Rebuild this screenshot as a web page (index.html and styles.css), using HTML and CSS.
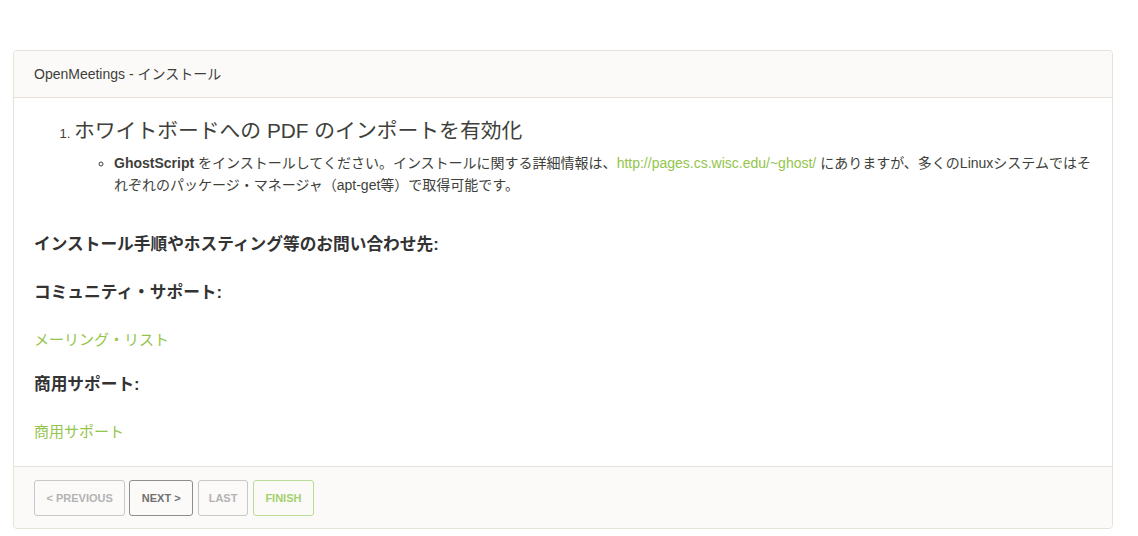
FILE: index.html
```html
<!DOCTYPE html>
<html lang="ja">
<head>
<meta charset="utf-8">
<title>OpenMeetings - インストール</title>
<link rel="stylesheet" href="styles.css">
</head>
<body>
<div class="panel">
  <div class="panel-heading">OpenMeetings - インストール</div>
  <div class="panel-body">
    <ol class="steps">
      <li><span class="step-title">ホワイトボードへの PDF のインポートを有効化</span>
        <ul class="sub">
          <li><b>GhostScript</b> をインストールしてください。インストールに関する詳細情報は、<a href="#">http://pages.cs.wisc.edu/~ghost/</a> にありますが、多くのLinuxシステムではそれぞれのパッケージ・マネージャ（apt-get等）で取得可能です。</li>
        </ul>
      </li>
    </ol>
    <p class="label first">インストール手順やホスティング等のお問い合わせ先:</p>
    <p class="label">コミュニティ・サポート:</p>
    <p class="link"><a href="#">メーリング・リスト</a></p>
    <p class="label">商用サポート:</p>
    <p class="link last"><a href="#">商用サポート</a></p>
  </div>
  <div class="panel-footer">
    <button class="btn btn-disabled">&lt; Previous</button>
    <button class="btn btn-next">Next &gt;</button>
    <button class="btn btn-disabled btn-last">Last</button>
    <button class="btn btn-finish">Finish</button>
  </div>
</div>
</body>
</html>
```
FILE: styles.css
```css
html, body {
  margin: 0;
  padding: 0;
  background: #ffffff;
}
body {
  font-family: "Liberation Sans", Arial, "Noto Sans CJK JP", sans-serif;
  color: #3e3f3a;
  font-size: 14px;
}
a {
  color: #93c54b;
  text-decoration: none;
}
.panel {
  width: 1098px;
  margin: 50px 0 0 13px;
  border: 1px solid #e6e2da;
  border-radius: 4px;
  background: #fff;
}
.panel-heading {
  background: #fbfaf8;
  border-bottom: 1px solid #e6e2da;
  border-radius: 4px 4px 0 0;
  padding: 0 20px;
  height: 46px;
  line-height: 46px;
  font-size: 14px;
  color: #3e3f3a;
}
.panel-body {
  padding: 18px 20px 23px;
}
.steps {
  margin: 0;
  padding-left: 40px;
  font-size: 13px;
}
.steps > li {
  line-height: 30px;
}
.step-title {
  font-size: 20.8px;
  line-height: 30px;
}
.sub {
  margin: 3px 0 0;
  padding-left: 40px;
  list-style-type: circle;
  font-size: 14px;
  line-height: 22px;
}
.sub li::marker {
  font-size: 14px;
}
.label {
  margin: 37px 0 0;
  font-size: 16.7px;
  font-weight: bold;
  line-height: 24px;
  color: #333;
}
.label + .label {
  margin-top: 24px;
}
.link + .label {
  margin-top: 22px;
}
.label + .link {
  margin: 24px 0 0;
}
.link {
  font-size: 15px;
  line-height: 22px;
}
.last {
  margin-bottom: 0;
}
.panel-footer {
  background: #fbfaf8;
  border-top: 1px solid #e6e2da;
  border-radius: 0 0 4px 4px;
  padding: 13px 20px 12px;
  display: flex;
  gap: 4px;
}
.btn {
  height: 36px;
  padding: 0 11.5px;
  background: transparent;
  border: 1px solid #c8c8c8;
  border-radius: 3px;
  font-family: "Liberation Sans", Arial, sans-serif;
  font-size: 11px;
  font-weight: bold;
  text-transform: uppercase;
  color: #b3b3b3;
}
.btn-next {
  border-color: #8e8e8e;
  color: #707070;
  margin-right: 1px;
}
.btn-last {
  padding: 0 9.5px;
}
.btn-finish {
  border-color: #b9dd94;
  color: #a3d16e;
  margin-left: 1px;
}
```
